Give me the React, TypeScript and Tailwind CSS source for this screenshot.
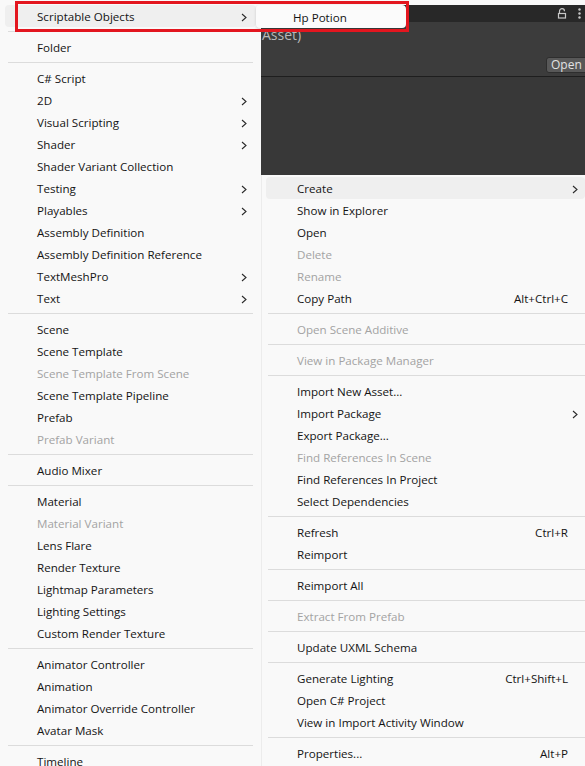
import React from 'react';

type Row = { label: string; disabled?: boolean; sub?: boolean; shortcut?: string; active?: boolean };
type Entry = Row | 'sep';

const LEFT_MENU: Entry[] = [
  { label: 'Scriptable Objects', sub: true, active: true },
  'sep',
  { label: 'Folder' },
  'sep',
  { label: 'C# Script' },
  { label: '2D', sub: true },
  { label: 'Visual Scripting', sub: true },
  { label: 'Shader', sub: true },
  { label: 'Shader Variant Collection' },
  { label: 'Testing', sub: true },
  { label: 'Playables', sub: true },
  { label: 'Assembly Definition' },
  { label: 'Assembly Definition Reference' },
  { label: 'TextMeshPro', sub: true },
  { label: 'Text', sub: true },
  'sep',
  { label: 'Scene' },
  { label: 'Scene Template' },
  { label: 'Scene Template From Scene', disabled: true },
  { label: 'Scene Template Pipeline' },
  { label: 'Prefab' },
  { label: 'Prefab Variant', disabled: true },
  'sep',
  { label: 'Audio Mixer' },
  'sep',
  { label: 'Material' },
  { label: 'Material Variant', disabled: true },
  { label: 'Lens Flare' },
  { label: 'Render Texture' },
  { label: 'Lightmap Parameters' },
  { label: 'Lighting Settings' },
  { label: 'Custom Render Texture' },
  'sep',
  { label: 'Animator Controller' },
  { label: 'Animation' },
  { label: 'Animator Override Controller' },
  { label: 'Avatar Mask' },
  'sep',
  { label: 'Timeline' },
];

const RIGHT_MENU: Entry[] = [
  { label: 'Create', sub: true, active: true },
  { label: 'Show in Explorer' },
  { label: 'Open' },
  { label: 'Delete', disabled: true },
  { label: 'Rename', disabled: true },
  { label: 'Copy Path', shortcut: 'Alt+Ctrl+C' },
  'sep',
  { label: 'Open Scene Additive', disabled: true },
  'sep',
  { label: 'View in Package Manager', disabled: true },
  'sep',
  { label: 'Import New Asset...' },
  { label: 'Import Package', sub: true },
  { label: 'Export Package...' },
  { label: 'Find References In Scene', disabled: true },
  { label: 'Find References In Project' },
  { label: 'Select Dependencies' },
  'sep',
  { label: 'Refresh', shortcut: 'Ctrl+R' },
  { label: 'Reimport' },
  'sep',
  { label: 'Reimport All' },
  'sep',
  { label: 'Extract From Prefab', disabled: true },
  'sep',
  { label: 'Update UXML Schema' },
  'sep',
  { label: 'Generate Lighting', shortcut: 'Ctrl+Shift+L' },
  { label: 'Open C# Project' },
  { label: 'View in Import Activity Window' },
  'sep',
  { label: 'Properties...', shortcut: 'Alt+P' },
];

function Chevron() {
  return (
    <svg width="6" height="9" viewBox="0 0 6 9" className="shrink-0">
      <polyline points="1,1 5,4.5 1,8" fill="none" stroke="#2a2a2a" strokeWidth="1.1" />
    </svg>
  );
}

function MenuList({ items, side }: { items: Entry[]; side: 'left' | 'right' }) {
  const rowBox = side === 'left' ? 'mx-[5px] pl-[32px] pr-[9px]' : 'ml-[4px] pl-[31px] pr-[7px]';
  const sepBox = side === 'left' ? 'mx-[8px]' : 'ml-[6px]';

  return (
    <div className="flex flex-col">
      {items.map((item, i) =>
        item === 'sep' ? (
          <div key={i} className={`my-[4px] h-px bg-[#dcdcdc] ${sepBox}`} />
        ) : (
          <div
            key={i}
            className={`flex h-[22px] items-center rounded-[4px] pt-[2px] ${rowBox} ${item.active ? 'bg-[#efefef]' : ''}`}
          >
            <span className={`flex-1 whitespace-nowrap ${item.disabled ? 'text-[#a3a3a3]' : 'text-[#141414]'}`}>
              {item.label}
            </span>
            {item.shortcut && <span className="mr-[10px] whitespace-nowrap text-[#141414]">{item.shortcut}</span>}
            {item.sub && <Chevron />}
          </div>
        )
      )}
    </div>
  );
}

export default function App() {
  return (
    <div className="relative flex h-[766px] w-[585px] overflow-hidden bg-[#f9f9f9] font-['Open_Sans',sans-serif] text-[11.6px]">
      {/* Create submenu */}
      <div className="w-[261px] shrink-0 bg-[#f9f9f9] pt-[5px]">
        <MenuList items={LEFT_MENU} side="left" />
      </div>

      <div className="flex min-w-0 flex-1 flex-col">
        {/* Inspector behind the menus */}
        <div className="flex h-[175px] flex-col">
          <div className="h-[5px] bg-[#f9f9f9]" />
          <div className="flex h-[17px] items-center justify-end gap-[11px] bg-[#282828] pr-[4px]">
            <svg width="10" height="11" viewBox="0 0 10 11">
              <path d="M2.5 5V3.2a2.5 2.5 0 0 1 5 0" fill="none" stroke="#c8c8c8" strokeWidth="1.2" />
              <rect x="1.5" y="5.5" width="7" height="4.5" fill="none" stroke="#c8c8c8" strokeWidth="1.2" />
            </svg>
            <svg width="3" height="11" viewBox="0 0 3 11">
              <circle cx="1.5" cy="1.5" r="1.2" fill="#c8c8c8" />
              <circle cx="1.5" cy="5.5" r="1.2" fill="#c8c8c8" />
              <circle cx="1.5" cy="9.5" r="1.2" fill="#c8c8c8" />
            </svg>
          </div>
          <div className="flex h-[54px] flex-col bg-[#3c3c3c] pt-[5px]">
            <div className="pl-[1px] text-[14px] leading-[16px] text-[#b9b9b9]">Asset)</div>
            <div className="mt-[14px] flex justify-end">
              <div className="-mr-[8px] h-[16px] w-[47px] rounded-[3px] border border-[#2e2e2e] bg-[#585858] pl-[4px] text-[12px] leading-[14px] text-[#e2e2e2]">
                Open
              </div>
            </div>
          </div>
          <div className="h-px bg-[#1e1e1e]" />
          <div className="flex-1 bg-[#383838]" />
        </div>

        {/* Project context menu */}
        <div className="flex-1 border-l border-[#ececec] bg-[#f9f9f9] pt-[2px]">
          <MenuList items={RIGHT_MENU} side="right" />
        </div>
      </div>

      {/* Scriptable Objects submenu */}
      <div className="absolute left-[256px] top-[5px] flex h-[23px] w-[150px] items-center rounded-[4px] bg-[#fbfbfb] pl-[37px] pt-[2px] text-[#141414] shadow-[0_1px_3px_rgba(0,0,0,0.15)]">
        Hp Potion
      </div>

      {/* highlight box */}
      <div className="absolute left-[15px] top-[1px] h-[31px] w-[394px] border-[3px] border-[#e3161f]" />
    </div>
  );
}
